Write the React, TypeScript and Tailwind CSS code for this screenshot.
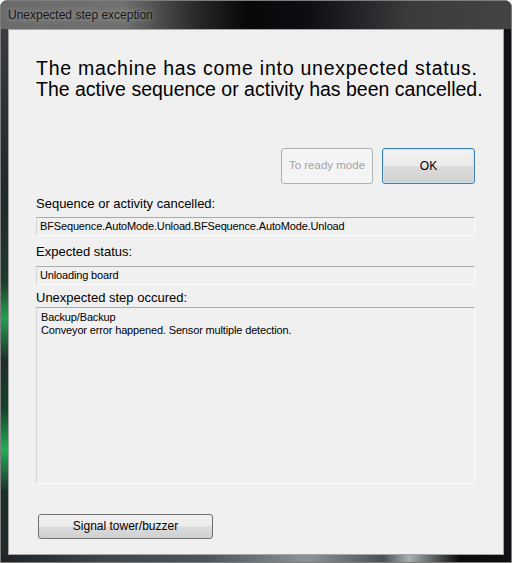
import React from 'react';

const font = "font-['Liberation_Sans',Arial,sans-serif]";

const ReadOnlyBox = ({ text }: { text: string }) => (
  <div className="h-[19px] flex items-center pl-[3px] bg-[#f0f0f0] border border-t-[#a9a9a9] border-l-[#d4d4d4] border-r-[#fdfdfd] border-b-[#fdfdfd] text-[11px] leading-[13px] tracking-[-0.15px] text-black whitespace-nowrap overflow-hidden">
    {text}
  </div>
);

export default function App() {
  return (
    <div className={`w-[512px] h-[563px] bg-white ${font}`}>
      <div className="w-full h-full flex flex-col rounded-t-[7px] overflow-hidden border border-[#7d7d7d] bg-[#1b1d20]">
        {/* title bar */}
        <div className="h-[28px] shrink-0 flex items-center pl-[7px] bg-[linear-gradient(to_right,#6b6b6b_0%,#707070_24%,#2a2a2c_38%,#08080b_48%,#0d0e12_60%,#3a3b3d_80%,#434446_100%)]">
          <span className="text-[12px] text-[#161616] [text-shadow:0_0_6px_rgba(255,255,255,0.55)]">Unexpected step exception</span>
        </div>

        <div className="flex-1 flex min-h-0">
          {/* left frame */}
          <div className="w-[7px] shrink-0 bg-[linear-gradient(to_bottom,#3b3d40_0%,#22272a_30%,#1f3a2c_48%,#22a04f_55%,#1f2e2a_63%,#14402a_72%,#1fae54_80%,#1b2f2a_88%,#24292c_100%)]" />

          {/* client area */}
          <div className="flex-1 min-w-0 flex flex-col bg-[#f0f0f0] border border-[#a5a5a5] pl-[27px] pr-[28px] pt-[28px]">
            <div className="text-[19.5px] leading-[20.5px] text-black whitespace-nowrap">
              <div className="tracking-[0.75px]">The machine has come into unexpected status.</div>
              <div className="tracking-[0px]">The active sequence or activity has been cancelled.</div>
            </div>

            <div className="flex justify-end gap-[9px] mt-[49px]">
              <button className="w-[92px] h-[36px] rounded-[3px] border border-[#adb2b5] bg-[#f4f4f4] text-[11.5px] text-[#a3a3a3]">
                To ready mode
              </button>
              <button className="w-[93px] h-[36px] rounded-[3px] border border-[#3c7fb1] bg-[linear-gradient(to_bottom,#f2f2f2_0%,#ebebeb_48%,#dddddd_52%,#cfcfcf_100%)] shadow-[inset_0_0_0_1px_#c6e6f7] text-[12px] text-black">
                OK
              </button>
            </div>

            <div className="text-[13px] leading-[15px] text-black mt-[12px]">Sequence or activity cancelled:</div>
            <div className="mt-[6px]">
              <ReadOnlyBox text="BFSequence.AutoMode.Unload.BFSequence.AutoMode.Unload" />
            </div>

            <div className="text-[13px] leading-[15px] text-black mt-[8px]">Expected status:</div>
            <div className="mt-[7px]">
              <ReadOnlyBox text="Unloading board" />
            </div>

            <div className="text-[13px] leading-[15px] text-black mt-[5px]">Unexpected step occured:</div>
            <div className="mt-[2px] h-[177px] bg-[#f0f0f0] border border-t-[#a9a9a9] border-l-[#d4d4d4] border-r-[#fdfdfd] border-b-[#fdfdfd] pl-[4px] pt-[3px] text-[11px] leading-[13px] tracking-[-0.15px] text-black">
              <div>Backup/Backup</div>
              <div>Conveyor error happened. Sensor multiple detection.</div>
            </div>

            <div className="mt-[29px] pl-[2px]">
              <button className="w-[175px] h-[25px] rounded-[3px] border border-[#707070] bg-[linear-gradient(to_bottom,#f2f2f2_0%,#ebebeb_48%,#dddddd_52%,#cfcfcf_100%)] text-[12px] text-black">
                Signal tower/buzzer
              </button>
            </div>
          </div>

          {/* right frame */}
          <div className="w-[7px] shrink-0 bg-[#121316]" />
        </div>

        {/* bottom frame */}
        <div className="h-[7px] shrink-0 bg-[linear-gradient(to_right,#1d2226_0%,#3f474d_20%,#4c555b_40%,#8c9499_60%,#4a5258_75%,#a8b0b3_80%,#0a0a0a_90%,#111_100%)]" />
      </div>
    </div>
  );
}
